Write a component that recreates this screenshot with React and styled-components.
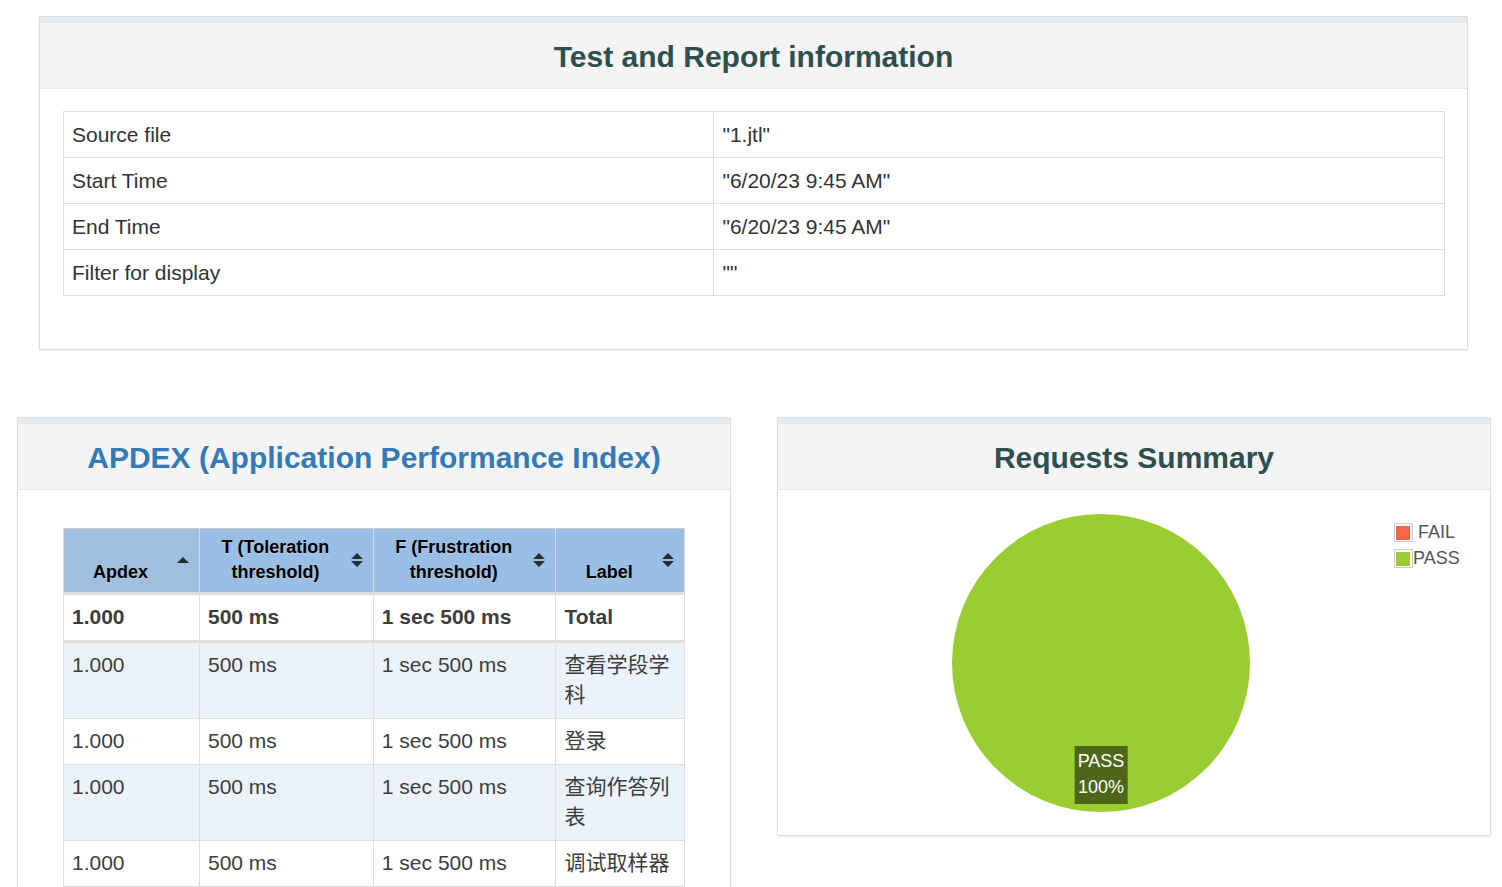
import React from 'react';
import styled, { createGlobalStyle } from 'styled-components';

const GlobalStyle = createGlobalStyle`
  * { box-sizing: border-box; }
  body {
    margin: 0;
    background: #fff;
    color: #333;
    font-family: "Liberation Sans", Arial, "Noto Sans CJK SC", sans-serif;
    font-size: 21px;
    line-height: 30px;
  }
`;

const Page = styled.main`
  height: 100vh;
  overflow: hidden;
  padding: 16px 11px 0 17px;
`;

const InfoSection = styled.section`
  padding: 0 23px 0 22px;
  margin-bottom: 67px;
`;

const Columns = styled.div`
  display: grid;
  grid-template-columns: 1fr 1fr;
  gap: 46px;
  align-items: start;
`;

const Panel = styled.article`
  border: 1px solid #ddd;
  border-radius: 1px;
  background: #fff;
  box-shadow: 0 1px 2px rgba(0, 0, 0, 0.08);
`;

const PanelHeader = styled.header`
  border-top: 6px solid #e7eaec;
  border-bottom: 1px solid #e7eaec;
  background: #f4f4f4;
  padding: 17px 23px 15px;
  text-align: center;
`;

const Title = styled.h2`
  margin: 0;
  font-size: 30px;
  line-height: 33px;
  font-weight: 700;
  color: #2f4f4f;
`;

const TitleLink = styled.a`
  color: #337ab7;
  text-decoration: none;
`;

const PanelBody = styled.div`
  padding: ${(p) => p.$pad};
`;

const Table = styled.table`
  width: 100%;
  table-layout: fixed;
  border-collapse: collapse;
`;

const Col = styled.col`
  width: ${(p) => p.$width};
`;

const Cell = styled.td`
  border: 1px solid #ddd;
  padding: 8px 8px 7px;
  text-align: left;
  vertical-align: top;
  font-weight: 400;
`;

const ResultCell = styled(Cell)`
  padding: 7px 8px 8px;
`;

const HeadCell = styled.th`
  border: 1px solid #d4d9de;
  border-top-color: #ccc;
  border-bottom: 3px solid #ddd;
  padding: 6px 10px 7px 8px;
  background: ${(p) => (p.$sorted ? '#9fbfdf' : '#99bfe6')};
`;

const SortButton = styled.button`
  display: flex;
  align-items: flex-end;
  gap: 8px;
  width: 100%;
  min-height: 50px;
  border: 0;
  padding: 0;
  background: transparent;
  color: #000;
  font: inherit;
  font-size: 18px;
  line-height: 25px;
  font-weight: 700;
  text-align: center;
  text-shadow: 0 1px 0 rgba(204, 204, 204, 0.7);
  cursor: pointer;
`;

const SortLabel = styled.span`
  flex: 1;
`;

const SortIcon = styled.svg`
  flex: none;
  align-self: center;
  width: 12px;
  height: 14px;
  fill: #222d30;
`;

const TotalRow = styled.tr`
  color: #3d3d3d;

  td {
    font-weight: 700;
    border-bottom: 3px solid #ddd;
  }
`;

const DataRow = styled.tr`
  color: #3d3d3d;
  background: #fff;

  &:nth-child(odd) {
    background: #ebf2fa;
  }
`;

const Chart = styled.div`
  display: flex;
  align-items: flex-start;
  padding: 24px 31px 23px 30px;
`;

const PieArea = styled.div`
  flex: 1;
  display: flex;
  justify-content: center;
`;

const PieFrame = styled.div`
  position: relative;
  width: 298px;
  height: 298px;
`;

const Pie = styled.svg`
  display: block;
  width: 100%;
  height: 100%;
`;

const PieLabel = styled.div`
  position: absolute;
  bottom: 8px;
  left: 50%;
  transform: translateX(-50%);
  padding: 2px 3px 4px;
  background: rgba(0, 0, 0, 0.5);
  color: #fff;
  font-size: 18px;
  line-height: 26px;
  text-align: center;
`;

const Legend = styled.ul`
  flex: none;
  width: 65px;
  margin: 5px 0 0;
  padding: 0;
  list-style: none;
  color: #545454;
  font-size: 18px;
  line-height: 26px;
`;

const LegendItem = styled.li`
  display: flex;
  align-items: center;
  white-space: pre;
`;

const Swatch = styled.span`
  flex: none;
  width: 19px;
  height: 19px;
  border: 1px solid #ccc;
  padding: 2px 2px 1px 1px;
  background: ${(p) => p.$color} content-box;
`;

const info = [
  ['Source file', '"1.jtl"'],
  ['Start Time', '"6/20/23 9:45 AM"'],
  ['End Time', '"6/20/23 9:45 AM"'],
  ['Filter for display', '""'],
];

const columns = [
  { label: 'Apdex', width: '21.9%', sorted: true },
  { label: 'T (Toleration threshold)', width: '28%' },
  { label: 'F (Frustration threshold)', width: '29.4%' },
  { label: 'Label', width: '20.7%' },
];

const labels = ['查看学段学科', '登录', '查询作答列表', '调试取样器'];

function Arrows({ ascending }) {
  return (
    <SortIcon viewBox="0 0 12 14" aria-hidden="true">
      <path d={ascending ? 'M6 4 L12 10 H0 Z' : 'M6 0 L12 6 H0 Z M0 8 H12 L6 14 Z'} />
    </SortIcon>
  );
}

export default function App() {
  return (
    <Page>
      <GlobalStyle />
      <InfoSection>
        <Panel>
          <PanelHeader>
            <Title>Test and Report information</Title>
          </PanelHeader>
          <PanelBody $pad="22px 22px 53px 23px">
            <Table>
              <colgroup>
                <Col $width="47.1%" />
                <Col $width="52.9%" />
              </colgroup>
              <tbody>
                {info.map(([name, value]) => (
                  <tr key={name}>
                    <Cell as="th" scope="row">{name}</Cell>
                    <Cell>{value}</Cell>
                  </tr>
                ))}
              </tbody>
            </Table>
          </PanelBody>
        </Panel>
      </InfoSection>

      <Columns>
        <Panel>
          <PanelHeader>
            <Title>
              <TitleLink href="#apdex">APDEX (Application Performance Index)</TitleLink>
            </Title>
          </PanelHeader>
          <PanelBody $pad="38px 45px">
            <Table>
              <colgroup>
                {columns.map((c) => (
                  <Col key={c.label} $width={c.width} />
                ))}
              </colgroup>
              <thead>
                <tr>
                  {columns.map((c) => (
                    <HeadCell key={c.label} scope="col" $sorted={c.sorted} aria-sort={c.sorted ? 'ascending' : 'none'}>
                      <SortButton type="button">
                        <SortLabel>{c.label}</SortLabel>
                        <Arrows ascending={c.sorted} />
                      </SortButton>
                    </HeadCell>
                  ))}
                </tr>
              </thead>
              <tbody>
                <TotalRow>
                  <ResultCell>1.000</ResultCell>
                  <ResultCell>500 ms</ResultCell>
                  <ResultCell>1 sec 500 ms</ResultCell>
                  <ResultCell>Total</ResultCell>
                </TotalRow>
              </tbody>
              <tbody>
                {labels.map((label) => (
                  <DataRow key={label}>
                    <ResultCell>1.000</ResultCell>
                    <ResultCell>500 ms</ResultCell>
                    <ResultCell>1 sec 500 ms</ResultCell>
                    <ResultCell>{label}</ResultCell>
                  </DataRow>
                ))}
              </tbody>
            </Table>
          </PanelBody>
        </Panel>

        <Panel>
          <PanelHeader>
            <Title>Requests Summary</Title>
          </PanelHeader>
          <Chart>
            <PieArea>
              <PieFrame>
                <Pie viewBox="0 0 298 298" role="img" aria-label="PASS 100%">
                  <circle cx="149" cy="149" r="149" fill="#9acd32" />
                </Pie>
                <PieLabel>
                  PASS
                  <br />
                  100%
                </PieLabel>
              </PieFrame>
            </PieArea>
            <Legend>
              <LegendItem>
                <Swatch $color="#ff6347" />
                {'\u00a0FAIL'}
              </LegendItem>
              <LegendItem>
                <Swatch $color="#9acd32" />
                PASS
              </LegendItem>
            </Legend>
          </Chart>
        </Panel>
      </Columns>
    </Page>
  );
}
